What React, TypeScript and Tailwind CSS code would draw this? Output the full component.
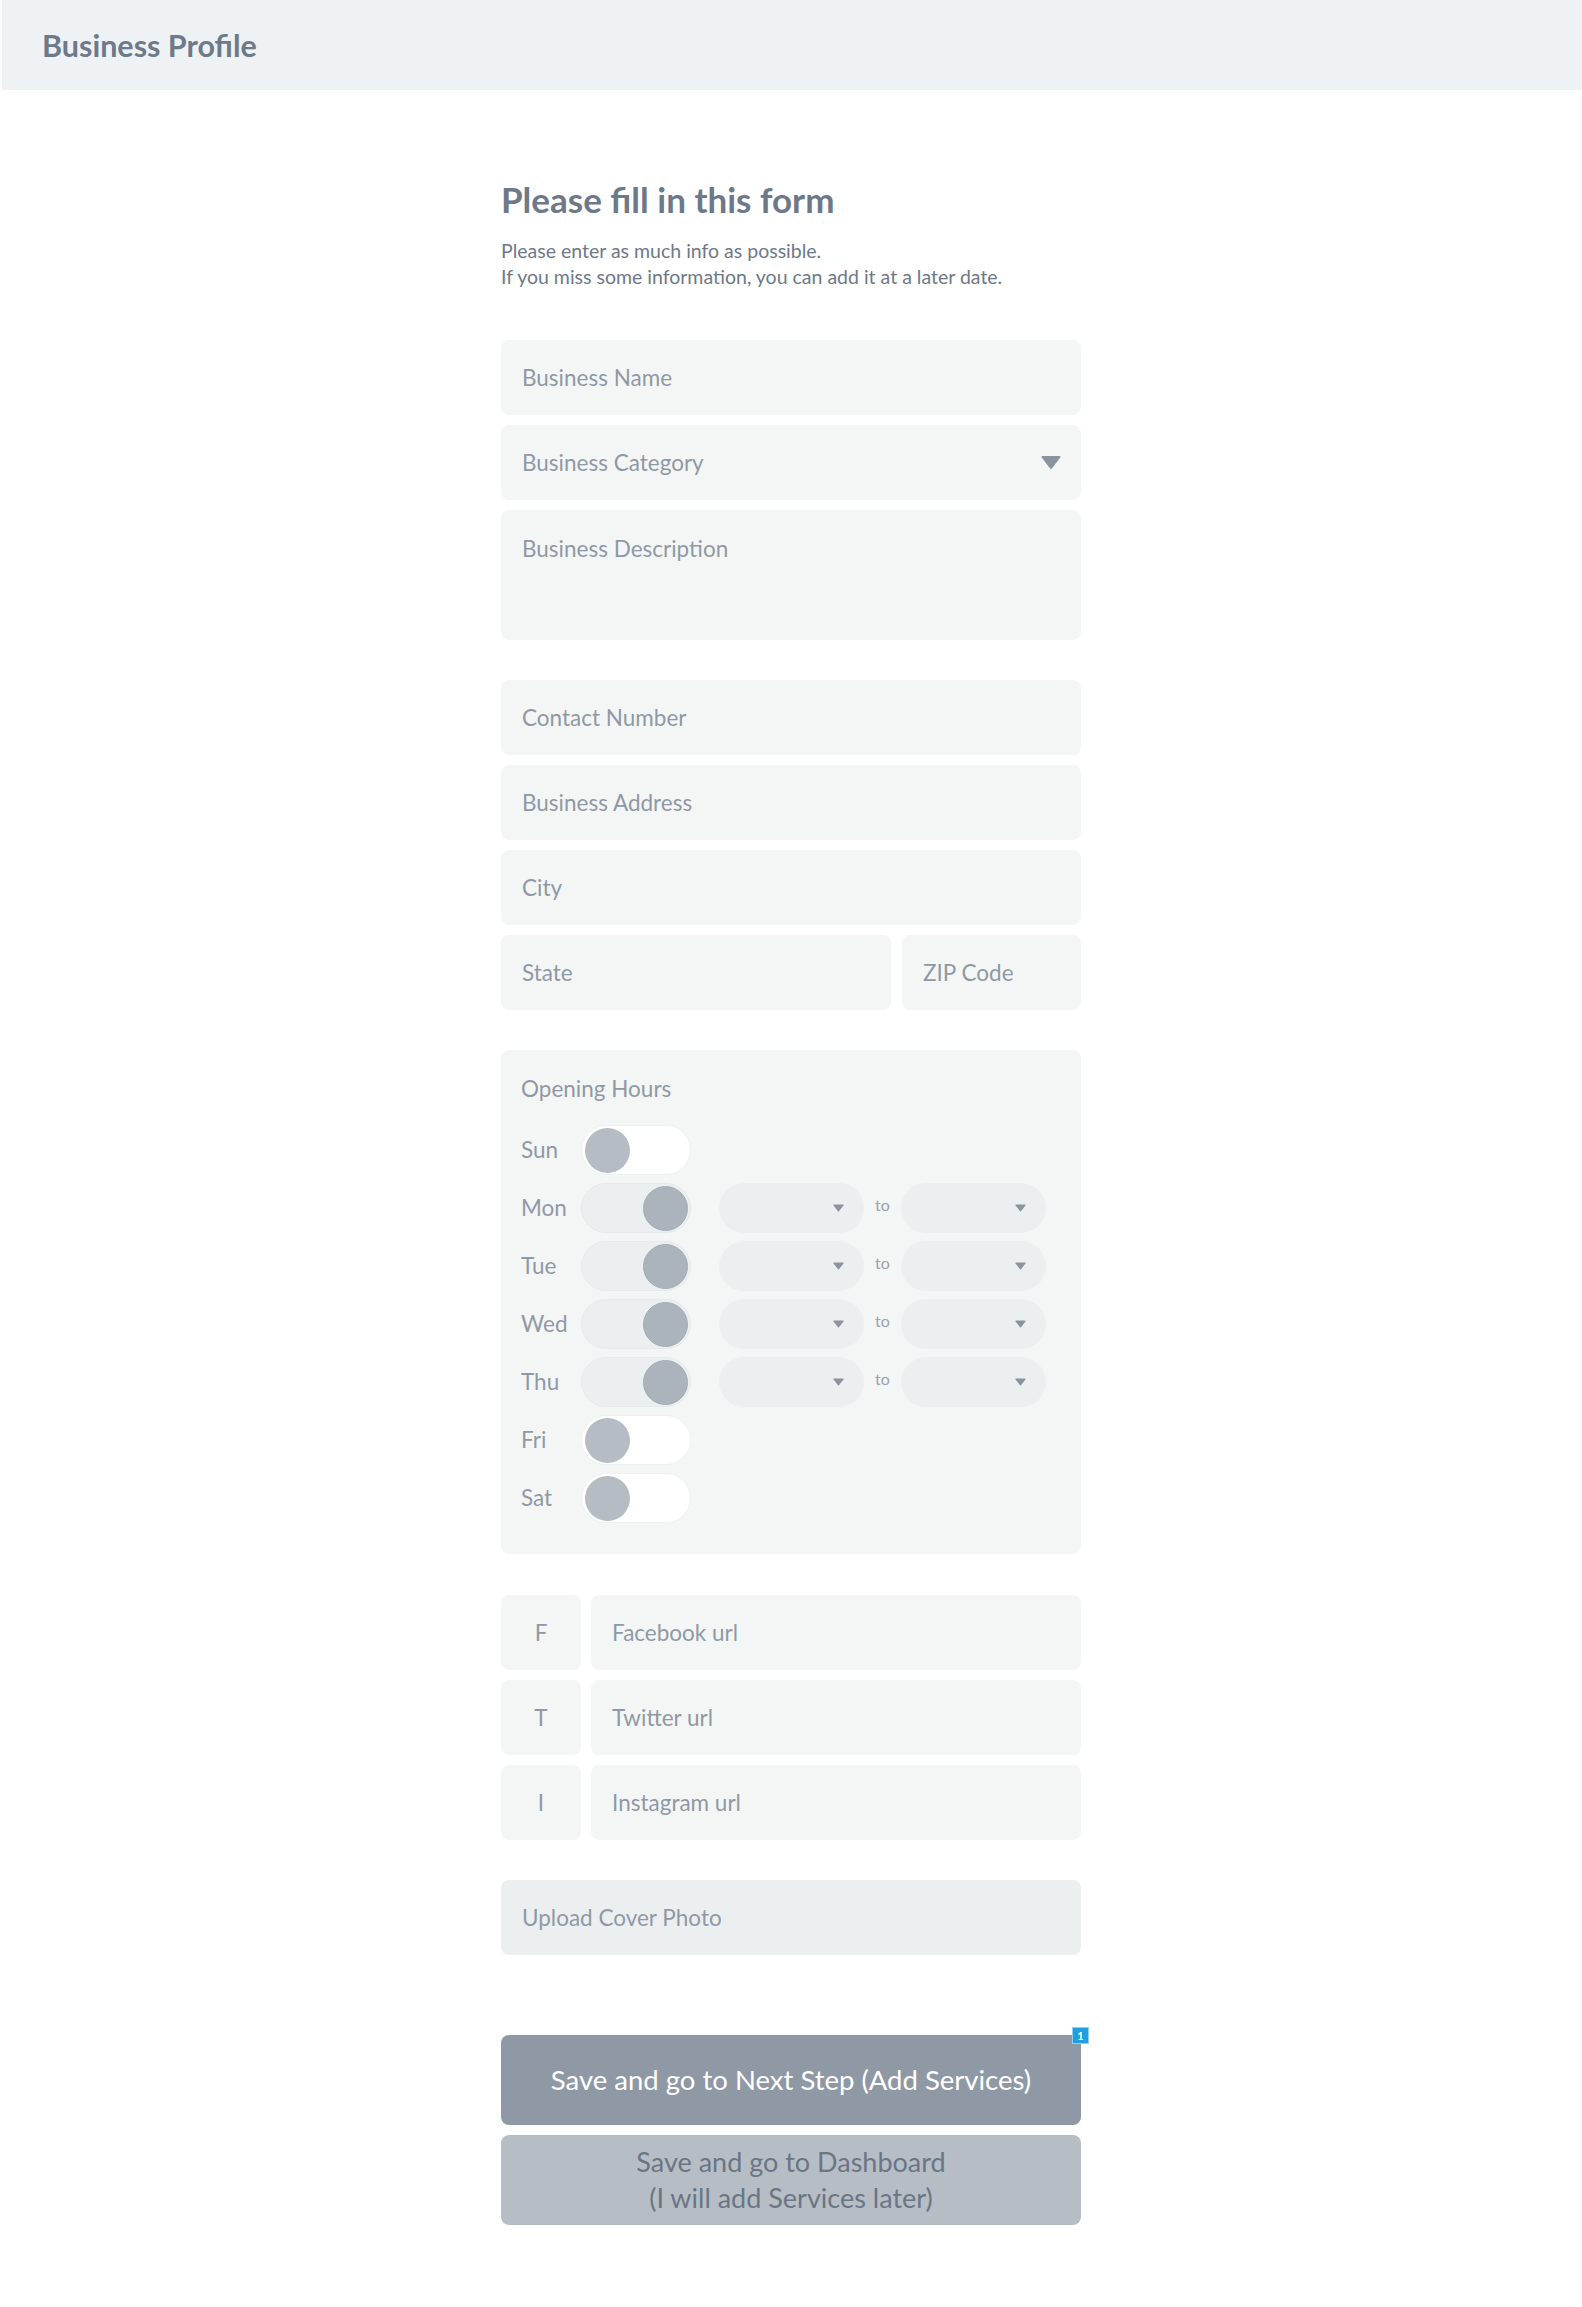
import React from 'react';

type FieldProps = {
  label: string;
  className?: string;
};

// plain placeholder-looking input box
const Field = ({ label, className = '' }: FieldProps) => (
  <div
    className={`h-[75px] rounded-[8px] bg-[#f4f6f6] pl-[21px] flex items-center text-[22.5px] text-[#8f99a5] ${className}`}
  >
    {label}
  </div>
);

const Caret = ({ className = '' }: { className?: string }) => (
  <svg viewBox="0 0 20 15" className={className} fill="#8a939e">
    <path d="M1.5 1h17c0.9 0 1.3 0.9 0.8 1.6l-8.4 11c-0.5 0.6-1.3 0.6-1.8 0L0.7 2.6C0.2 1.9 0.6 1 1.5 1z" />
  </svg>
);

const Toggle = ({ on }: { on: boolean }) =>
  on ? (
    <div className="w-[110px] h-[50px] rounded-full bg-[#eceff0] border border-[#e6eaec] flex items-center justify-end pr-[2px]">
      <div className="w-[45px] h-[45px] rounded-full bg-[#abb3bc] border border-[#a5adb7]" />
    </div>
  ) : (
    <div className="w-[110px] h-[50px] rounded-full bg-white border border-[#eef1f2] flex items-center pl-[3px]">
      <div className="w-[45px] h-[45px] rounded-full bg-[#b6bcc4]" />
    </div>
  );

const TimeSelect = () => (
  <div className="w-[145px] h-[50px] rounded-full bg-[#eceff0] flex items-center justify-end pr-[20px]">
    <Caret className="w-[11px] h-[8px]" />
  </div>
);

const days: { name: string; open: boolean }[] = [
  { name: 'Sun', open: false },
  { name: 'Mon', open: true },
  { name: 'Tue', open: true },
  { name: 'Wed', open: true },
  { name: 'Thu', open: true },
  { name: 'Fri', open: false },
  { name: 'Sat', open: false },
];

const socials = [
  { letter: 'F', label: 'Facebook url' },
  { letter: 'T', label: 'Twitter url' },
  { letter: 'I', label: 'Instagram url' },
];

const App = () => {
  return (
    <div className="min-h-[2307px] bg-white font-['Lato',sans-serif]">
      {/* Top bar */}
      <header className="ml-[2px] h-[90px] bg-[#eff2f4] flex items-center pl-[40px]">
        <h1 className="text-[30.5px] font-bold text-[#6d7a89] leading-none">Business Profile</h1>
      </header>

      <main className="mx-auto w-[580px] pt-[88px] pb-[80px]">
        <h2 className="text-[35px] leading-[42px] font-bold text-[#6d7988]">Please fill in this form</h2>
        <p className="mt-[18px] text-[19.5px] leading-[26px] text-[#6d7988]">
          Please enter as much info as possible.
          <br />
          If you miss some information, you can add it at a later date.
        </p>

        {/* Business basics */}
        <div className="mt-[50px] flex flex-col gap-[10px]">
          <Field label="Business Name" />
          <div className="relative">
            <Field label="Business Category" />
            <Caret className="absolute right-[20px] top-[30px] w-[20px] h-[15px]" />
          </div>
          <div className="h-[130px] rounded-[8px] bg-[#f4f6f6] pl-[21px] pt-[22px] text-[22.5px] text-[#8f99a5]">
            Business Description
          </div>
        </div>

        {/* Contact & address */}
        <div className="mt-[40px] flex flex-col gap-[10px]">
          <Field label="Contact Number" />
          <Field label="Business Address" />
          <Field label="City" />
          <div className="flex gap-[11px]">
            <Field label="State" className="flex-1" />
            <Field label="ZIP Code" className="w-[179px]" />
          </div>
        </div>

        {/* Opening hours */}
        <div className="mt-[40px] rounded-[8px] bg-[#f4f6f6] pl-[20px] pt-[25px] pb-[31px]">
          <div className="text-[22.5px] leading-[28px] text-[#8f99a5]">Opening Hours</div>
          <div className="mt-[22px] flex flex-col gap-[8px]">
            {days.map((d) => (
              <div key={d.name} className="flex items-center h-[50px]">
                <span className="w-[60px] text-[22.5px] text-[#8f99a5]">{d.name}</span>
                <Toggle on={d.open} />
                {d.open && (
                  <div className="ml-[28px] flex items-center">
                    <TimeSelect />
                    <span className="w-[37px] pl-[11px] -mt-[6px] text-[16px] text-[#9aa3ad]">to</span>
                    <TimeSelect />
                  </div>
                )}
              </div>
            ))}
          </div>
        </div>

        {/* Social links */}
        <div className="mt-[41px] flex flex-col gap-[10px]">
          {socials.map((s) => (
            <div key={s.letter} className="flex gap-[10px]">
              <div className="w-[80px] h-[75px] rounded-[8px] bg-[#f4f6f6] flex items-center justify-center text-[22.5px] text-[#8f99a5]">
                {s.letter}
              </div>
              <Field label={s.label} className="flex-1" />
            </div>
          ))}
        </div>

        <Field label="Upload Cover Photo" className="mt-[40px] !bg-[#eceff0]" />

        {/* Actions */}
        <div className="mt-[80px] flex flex-col gap-[10px]">
          <div className="relative">
            <button className="w-full h-[90px] rounded-[8px] bg-[#8f99a5] text-white text-[27.5px]">
              Save and go to Next Step (Add Services)
            </button>
            <span className="absolute -top-[8px] -right-[8px] w-[17px] h-[17px] bg-[#1e9fdf] border border-[#8fd0f0] text-white text-[11px] font-bold flex items-center justify-center leading-none">
              1
            </span>
          </div>
          <button className="w-full h-[90px] rounded-[8px] bg-[#b7bdc5] text-[#6a7686] text-[27px] leading-[36px]">
            Save and go to Dashboard
            <br />
            (I will add Services later)
          </button>
        </div>
      </main>
    </div>
  );
};

export default App;
